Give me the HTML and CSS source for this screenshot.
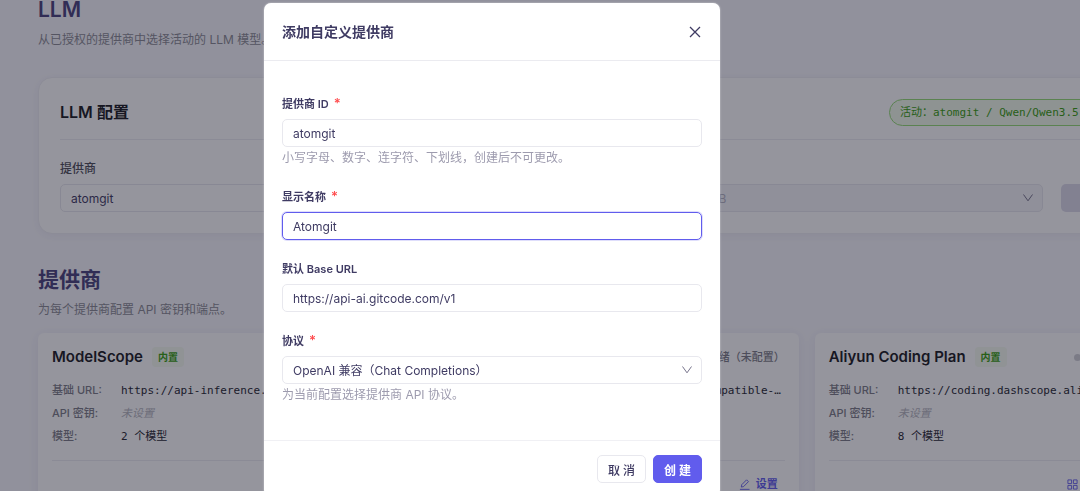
FILE: index.html
```html
<!DOCTYPE html>
<html lang="zh-CN">
<head>
    <meta charset="UTF-8">
    <meta name="viewport" content="width=device-width, initial-scale=1.0">
    <title>LLM</title>
    <link rel="stylesheet" href="styles.css">
</head>
<body>

    <main class="page">
        <section class="section">
            <h1 class="sectionTitle">LLM</h1>
            <p class="sectionDesc">从已授权的提供商中选择活动的 LLM 模型。</p>
            <div class="configCard">
                <div class="configHeader">
                    <h2 class="configTitle">LLM 配置</h2>
                    <span class="activeTag">活动：atomgit / Qwen/Qwen3.5-397B-A17B</span>
                </div>
                <div class="configForm">
                    <div class="configField">
                        <label class="configLabel" for="provider">提供商</label>
                        <div class="selectBox">
                            <select class="control" id="provider"><option>atomgit</option></select>
                            <svg class="arrow" viewBox="0 0 12 12"><path d="M1.500 2.500L6 8.800l4.500-6.300"/></svg>
                        </div>
                    </div>
                    <div class="configField">
                        <label class="configLabel" for="model">模型</label>
                        <div class="selectBox">
                            <select class="control" id="model" disabled><option>Qwen/Qwen3.5-397B-A17B</option></select>
                            <svg class="arrow" viewBox="0 0 12 12"><path d="M1.500 2.500L6 8.800l4.500-6.300"/></svg>
                        </div>
                    </div>
                    <button class="saveBtn" disabled>保存</button>
                </div>
            </div>
        </section>

        <section class="section">
            <h1 class="sectionTitle">提供商</h1>
            <p class="sectionDesc">为每个提供商配置 API 密钥和端点。</p>
            <div class="cardList">
                <article class="card">
                    <div class="cardHeader">
                        <h3 class="cardTitle">ModelScope</h3>
                        <span class="badge">内置</span>
                        <span class="status">未就绪（未配置）</span>
                    </div>
                    <dl class="info">
                        <dt>基础 URL:</dt><dd>https://api-inference.modelscope.cn/v1</dd>
                        <dt>API 密钥:</dt><dd class="empty">未设置</dd>
                        <dt>模型:</dt><dd>2 个模型</dd>
                    </dl>
                    <div class="actions">
                        <button class="actionBtn"><svg class="icon" viewBox="0 0 12 12"><path d="M1 1h4v4H1zM7 1h4v4H7zM1 7h4v4H1zM7 7h4v4H7z"/></svg>模型</button>
                        <button class="actionBtn"><svg class="icon" viewBox="0 0 12 12"><path d="M1 11.300h10.500M2.500 8.800l.5-2.600L8.300.9l2 2L5 8.300z"/></svg>设置</button>
                    </div>
                </article>
                <article class="card">
                    <div class="cardHeader">
                        <h3 class="cardTitle">DashScope</h3>
                        <span class="badge">内置</span>
                        <span class="status">未就绪（未配置）</span>
                    </div>
                    <dl class="info">
                        <dt>基础 URL:</dt><dd>https://dashscope.aliyun.com/compatible-mode/v1</dd>
                        <dt>API 密钥:</dt><dd class="empty">未设置</dd>
                        <dt>模型:</dt><dd>5 个模型</dd>
                    </dl>
                    <div class="actions">
                        <button class="actionBtn"><svg class="icon" viewBox="0 0 12 12"><path d="M1 1h4v4H1zM7 1h4v4H7zM1 7h4v4H1zM7 7h4v4H7z"/></svg>模型</button>
                        <button class="actionBtn"><svg class="icon" viewBox="0 0 12 12"><path d="M1 11.300h10.500M2.500 8.800l.5-2.600L8.300.9l2 2L5 8.300z"/></svg>设置</button>
                    </div>
                </article>
                <article class="card">
                    <div class="cardHeader">
                        <h3 class="cardTitle">Aliyun Coding Plan</h3>
                        <span class="badge">内置</span>
                        <span class="status">未就绪（未配置）</span>
                    </div>
                    <dl class="info">
                        <dt>基础 URL:</dt><dd>https://coding.dashscope.aliyuncs.com/v1</dd>
                        <dt>API 密钥:</dt><dd class="empty">未设置</dd>
                        <dt>模型:</dt><dd>8 个模型</dd>
                    </dl>
                    <div class="actions">
                        <button class="actionBtn"><svg class="icon" viewBox="0 0 12 12"><path d="M1 1h4v4H1zM7 1h4v4H7zM1 7h4v4H1zM7 7h4v4H7z"/></svg>模型</button>
                        <button class="actionBtn"><svg class="icon" viewBox="0 0 12 12"><path d="M1 11.300h10.500M2.500 8.800l.5-2.600L8.300.9l2 2L5 8.300z"/></svg>设置</button>
                    </div>
                </article>
            </div>
        </section>
    </main>

    <div class="mask">
        <form class="modal" role="dialog" aria-labelledby="modalTitle">
            <div class="modalHeader">
                <h2 class="modalTitle" id="modalTitle">添加自定义提供商</h2>
                <button class="closeBtn" type="button" aria-label="关闭">
                    <svg viewBox="0 0 12 12"><path d="M1 1l10 10M11 1L1 11"/></svg>
                </button>
            </div>
            <div class="modalBody">
                <div class="field">
                    <label class="fieldLabel required" for="providerId">提供商 ID</label>
                    <input class="control" id="providerId" type="text" value="atomgit">
                    <p class="hint">小写字母、数字、连字符、下划线，创建后不可更改。</p>
                </div>
                <div class="field">
                    <label class="fieldLabel required" for="displayName">显示名称</label>
                    <input class="control focused" id="displayName" type="text" value="Atomgit">
                </div>
                <div class="field">
                    <label class="fieldLabel" for="baseUrl">默认 Base URL</label>
                    <input class="control" id="baseUrl" type="text" value="https://api-ai.gitcode.com/v1">
                </div>
                <div class="field">
                    <label class="fieldLabel required" for="protocol">协议</label>
                    <div class="selectBox">
                        <select class="control" id="protocol"><option>OpenAI 兼容（Chat Completions）</option></select>
                        <svg class="arrow" viewBox="0 0 12 12"><path d="M1.500 2.500L6 8.800l4.500-6.300"/></svg>
                    </div>
                    <p class="hint">为当前配置选择提供商 API 协议。</p>
                </div>
            </div>
            <div class="modalFooter">
                <button class="btn" type="button">取 消</button>
                <button class="btn primary" type="button">创 建</button>
            </div>
        </form>
    </div>

</body>
</html>
```

FILE: styles.css
```css
*{
    padding: 0;
    margin: 0;
    box-sizing: border-box;
}
body{
    overflow: hidden;
    background-color: #f8f8fd;
    color: #3f3b63;
    font-family: Inter, "Noto Sans CJK SC", sans-serif;
    font-size: 12px;
    line-height: 20px;
}
button,input,select{
    font-family: inherit;
}
svg{
    display: block;
    fill: none;
    stroke: currentColor;
}
.page{
    min-width: 1225px;
    padding: 0 38px;
}
.section{
    margin-bottom: 36px;
}
.sectionTitle{
    margin-bottom: 10px;
    color: #49427c;
    font-size: 21px;
    font-weight: 600;
    line-height: 20px;
}
.sectionDesc{
    color: #8b8b94;
}

/* LLM 配置 */
.configCard{
    margin-top: 27px;
    padding: 21px;
    border: 1px solid #eeeef4;
    border-radius: 14px;
    background-color: #fff;
    box-shadow: 0 2px 8px rgba(60, 50, 120, 0.06);
}
.configHeader{
    display: flex;
    align-items: center;
    justify-content: space-between;
    height: 41px;
    padding-bottom: 14px;
    border-bottom: 1px solid #ededf2;
}
.configTitle{
    color: #1a1a22;
    font-size: 16px;
    font-weight: 600;
}
.activeTag{
    min-width: 276px;
    padding: 0 10px;
    border: 1px solid #95dc75;
    border-radius: 14px;
    background-color: #f3fbec;
    color: #389e0d;
    font-family: "DejaVu Sans Mono", "Noto Sans CJK SC", monospace;
    font-size: 11px;
    line-height: 25px;
}
.configForm{
    display: flex;
    align-items: flex-end;
    gap: 18px;
    margin-top: 19px;
}
.configField{
    flex: 1;
}
.configLabel{
    display: block;
    margin-bottom: 5px;
    color: #4d4d58;
    font-weight: 500;
}
.control{
    display: block;
    width: 100%;
    height: 28px;
    padding: 0 10px;
    border: 1px solid #e8e8ee;
    border-radius: 5px;
    outline: none;
    appearance: none;
    background-color: #fff;
    color: #3f3b63;
    font-size: 12px;
}
.control:disabled{
    background-color: #f6f6fa;
    color: #b5b3c2;
    opacity: 1;
}
.control.focused{
    border-color: #615ced;
    box-shadow: 0 0 0 1px rgba(97, 92, 237, 0.2);
}
.selectBox{
    position: relative;
}
.arrow{
    position: absolute;
    top: 8px;
    right: 9px;
    width: 12px;
    height: 12px;
    color: #77748c;
    pointer-events: none;
}
.saveBtn{
    width: 104px;
    height: 28px;
    border: none;
    border-radius: 5px;
    background-color: #dddbea;
    color: #fff;
    font-size: 12px;
}

/* 提供商列表 */
.cardList{
    display: grid;
    grid-template-columns: repeat(3, 1fr);
    gap: 16px;
    margin-top: 13px;
}
.card{
    min-width: 0;
    padding: 14px;
    border-radius: 6px;
    background-color: #fff;
    box-shadow: 0 2px 12px rgba(60, 50, 120, 0.08);
}
.cardHeader{
    display: flex;
    align-items: center;
    height: 20px;
}
.cardTitle{
    color: #1a1a22;
    font-size: 15px;
    font-weight: 600;
}
.badge{
    margin-left: 9px;
    padding: 0 6px;
    border-radius: 4px;
    background-color: #f6fbf0;
    color: #389e0d;
    font-size: 10px;
    font-weight: 600;
}
.status{
    display: flex;
    align-items: center;
    gap: 4px;
    margin-left: auto;
    color: #7d7d87;
    font-size: 11px;
    font-weight: 500;
}
.status::before{
    content: "";
    width: 7px;
    height: 7px;
    border-radius: 50%;
    background-color: #d0d0d6;
}
.info{
    display: grid;
    grid-template-columns: 69px 1fr;
    margin-top: 12px;
    padding-bottom: 12px;
    border-bottom: 1px solid #ededf2;
    font-size: 11px;
    line-height: 23px;
}
.info dt{
    color: #7d7d87;
    font-weight: 500;
}
.info dd{
    overflow: hidden;
    color: #26262f;
    font-family: "DejaVu Sans Mono", "Noto Sans CJK SC", monospace;
    text-overflow: ellipsis;
    white-space: nowrap;
}
.info .empty{
    color: #b4b4bc;
    font-family: inherit;
    font-style: italic;
}
.actions{
    display: flex;
    justify-content: flex-end;
    gap: 7px;
    margin-top: 13px;
}
.actionBtn{
    display: flex;
    align-items: center;
    gap: 6px;
    padding: 0 7px;
    border: none;
    background: none;
    color: #615ced;
    font-size: 11px;
    font-weight: 600;
    line-height: 20px;
}
.icon{
    width: 11px;
    height: 11px;
}

/* 弹窗 */
.mask{
    position: fixed;
    top: 0;
    right: 0;
    bottom: 0;
    left: 0;
    display: flex;
    align-items: flex-start;
    justify-content: center;
    padding: 3px 96px 0 0;
    background-color: rgba(20, 20, 38, 0.45);
}
.modal{
    width: 456px;
    border-radius: 7px;
    background-color: #fff;
    box-shadow: 0 0 2px rgba(255, 255, 255, 0.6);
}
.modalHeader{
    display: flex;
    align-items: center;
    justify-content: space-between;
    height: 58px;
    padding: 0 18px;
    border-bottom: 1px solid #ebebf0;
}
.modalTitle{
    font-size: 14px;
    font-weight: 600;
}
.closeBtn{
    padding: 1px;
    border: none;
    background: none;
    color: #3f3b63;
}
.closeBtn svg{
    width: 12px;
    height: 12px;
    stroke-width: 1.3;
}
.modalBody{
    padding: 33px 18px 17px;
}
.field{
    margin-bottom: 18px;
}
.fieldLabel{
    display: block;
    margin-bottom: 5px;
    font-size: 11px;
    font-weight: 600;
}
.field + .field{
    margin-top: 19px;
}
.required::after{
    content: "*";
    margin-left: 5px;
    color: #ff4d4f;
    font-size: 13px;
    line-height: 1;
}
.hint{
    color: #9d9bae;
    line-height: 21px;
}
.modalFooter{
    display: flex;
    justify-content: flex-end;
    gap: 7px;
    padding: 14px 18px;
    border-top: 1px solid #f0f0f4;
}
.btn{
    width: 49px;
    height: 28px;
    border: 1px solid #e8e8ee;
    border-radius: 5px;
    background-color: #fff;
    color: #3f3b63;
    font-size: 12px;
    font-weight: 500;
}
.btn.primary{
    border-color: #615ced;
    background-color: #615ced;
    color: #fff;
    font-weight: 600;
}
```
